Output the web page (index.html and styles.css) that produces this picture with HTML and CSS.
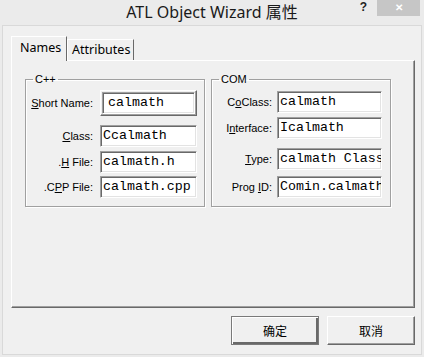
FILE: index.html
```html
<!DOCTYPE html>
<html lang="zh-CN">
<head>
  <meta charset="UTF-8">
  <title>ATL Object Wizard 属性</title>
  <link rel="stylesheet" href="styles.css">
</head>
<body>
  <div class="titlebar">
    <div></div>
    <div class="title">ATL Object Wizard 属性</div>
    <div class="controls">
      <span class="help">?</span>
      <span class="close">&#x2715;</span>
    </div>
  </div>

  <div class="client">
    <div class="tabs">
      <div class="tab active">Names</div>
      <div class="tab">Attributes</div>
    </div>

    <div class="panel">
      <!-- C++ 分组 -->
      <fieldset class="group cpp">
        <legend>C++</legend>
        <div class="row r1">
          <label><u>S</u>hort Name:</label>
          <div class="frame"><div class="edit">calmath</div></div>
        </div>
        <div class="row r2">
          <label><u>C</u>lass:</label>
          <div class="edit">Ccalmath</div>
        </div>
        <div class="row r3">
          <label>.<u>H</u> File:</label>
          <div class="edit">calmath.h</div>
        </div>
        <div class="row r4">
          <label>.C<u>P</u>P File:</label>
          <div class="edit">calmath.cpp</div>
        </div>
      </fieldset>

      <!-- COM 分组 -->
      <fieldset class="group com">
        <legend>COM</legend>
        <div class="row c1">
          <label>C<u>o</u>Class:</label>
          <div class="edit">calmath</div>
        </div>
        <div class="row c2">
          <label>I<u>n</u>terface:</label>
          <div class="edit">Icalmath</div>
        </div>
        <div class="row c3">
          <label><u>T</u>ype:</label>
          <div class="edit">calmath Class</div>
        </div>
        <div class="row c4">
          <label>Prog <u>I</u>D:</label>
          <div class="edit">Comin.calmath.1</div>
        </div>
      </fieldset>
    </div>

    <div class="buttons">
      <button class="btn default">确定</button>
      <button class="btn">取消</button>
    </div>
  </div>
</body>
</html>
```

FILE: styles.css
```css
*{margin:0;padding:0;box-sizing:border-box;}

body{width:424px;height:357px;background:#ebebeb;font-family:"Liberation Sans","Noto Sans CJK SC",sans-serif;color:#000;overflow:hidden;}

/* 标题栏 */
.titlebar{height:25px;display:grid;grid-template-columns:1fr auto 1fr;}
.title{font-family:"Noto Sans","Noto Sans CJK SC",sans-serif;font-size:16px;line-height:24px;color:#1a1a1a;}
.controls{justify-self:end;display:flex;align-items:flex-start;gap:10px;margin-right:4px;}
.help{font-family:"Liberation Sans",sans-serif;font-weight:bold;font-size:12px;line-height:12px;margin-top:1px;color:#222;}
.close{width:43px;height:16px;background:#c6c6c6;color:#fff;font-size:10px;line-height:16px;text-align:center;font-weight:bold;}

/* 窗口客户区 */
.client{height:330px;margin:0 2px;background:#f0f0f0;border:1px solid #d9d9d9;padding:10px 0 0 8px;}

.tabs{display:flex;align-items:flex-end;height:24px;position:relative;z-index:1;}
.tab{height:21px;padding:0 4px;font-family:"Noto Sans",sans-serif;font-size:12.5px;line-height:19px;border:1px solid;border-color:#fff #696969 transparent #fff;border-bottom:none;}
.tab.active{width:56px;height:25px;margin-bottom:-1px;background:#f0f0f0;padding-left:8px;line-height:21px;}
.tab:not(.active){width:67px;margin-bottom:0;}

.panel{width:404px;height:248px;border:1px solid;border-color:#fff #696969 #696969 #fff;box-shadow:inset -1px -1px #a0a0a0;padding:12px 0 0 13px;display:flex;align-items:flex-start;gap:6px;}

/* 分组框 */
.group{width:180px;height:134px;border:1px solid #a0a0a0;box-shadow:inset 1px 1px #fff,1px 1px #fff;padding:0;}
.group legend{font-size:11px;margin-left:7px;padding:0 2px;line-height:13px;}

.row{display:flex;align-items:center;}
.row label{font-size:11px;text-align:right;white-space:nowrap;}
.cpp .row label{width:67px;margin-right:7px;}
.com .row label{width:60px;margin-right:5px;}
.row u{text-decoration:underline;text-underline-offset:1px;}

.cpp .edit{width:97px;}
.com .edit{width:105px;}
.edit{height:22px;background:#fff;border:1px solid;border-color:#a0a0a0 #fff #fff #a0a0a0;box-shadow:inset 1px 1px #696969,inset -1px -1px #e3e3e3;font-family:"Liberation Mono",monospace;font-size:13.3px;line-height:20px;padding-left:2px;white-space:nowrap;overflow:hidden;}

.frame{width:97px;height:26px;border:1px solid;border-color:#fff #696969 #696969 #fff;box-shadow:inset -1px -1px #a0a0a0;padding:1px;}
.frame .edit{width:100%;height:100%;padding-left:5px;line-height:20px;}

.r1{margin-top:4px;}
.r2{margin-top:9px;}
.r3{margin-top:4px;}
.r4{margin-top:3px;}
.c1{margin-top:5px;}
.c2{margin-top:4px;}
.c3{margin-top:9px;}
.c4{margin-top:6px;}

/* 底部按钮 */
.buttons{display:flex;justify-content:flex-end;gap:8px;margin-top:8px;width:404px;}
.btn{width:88px;height:29px;background:#f0f0f0;border:1px solid;border-color:#fff #696969 #696969 #fff;box-shadow:inset -1px -1px #a0a0a0;font-family:"Noto Sans CJK SC",sans-serif;font-size:12px;color:#000;}
.btn.default{border:1px solid #7a7a7a;box-shadow:inset 1px 1px #fff,inset -2px -2px #696969;}
```
